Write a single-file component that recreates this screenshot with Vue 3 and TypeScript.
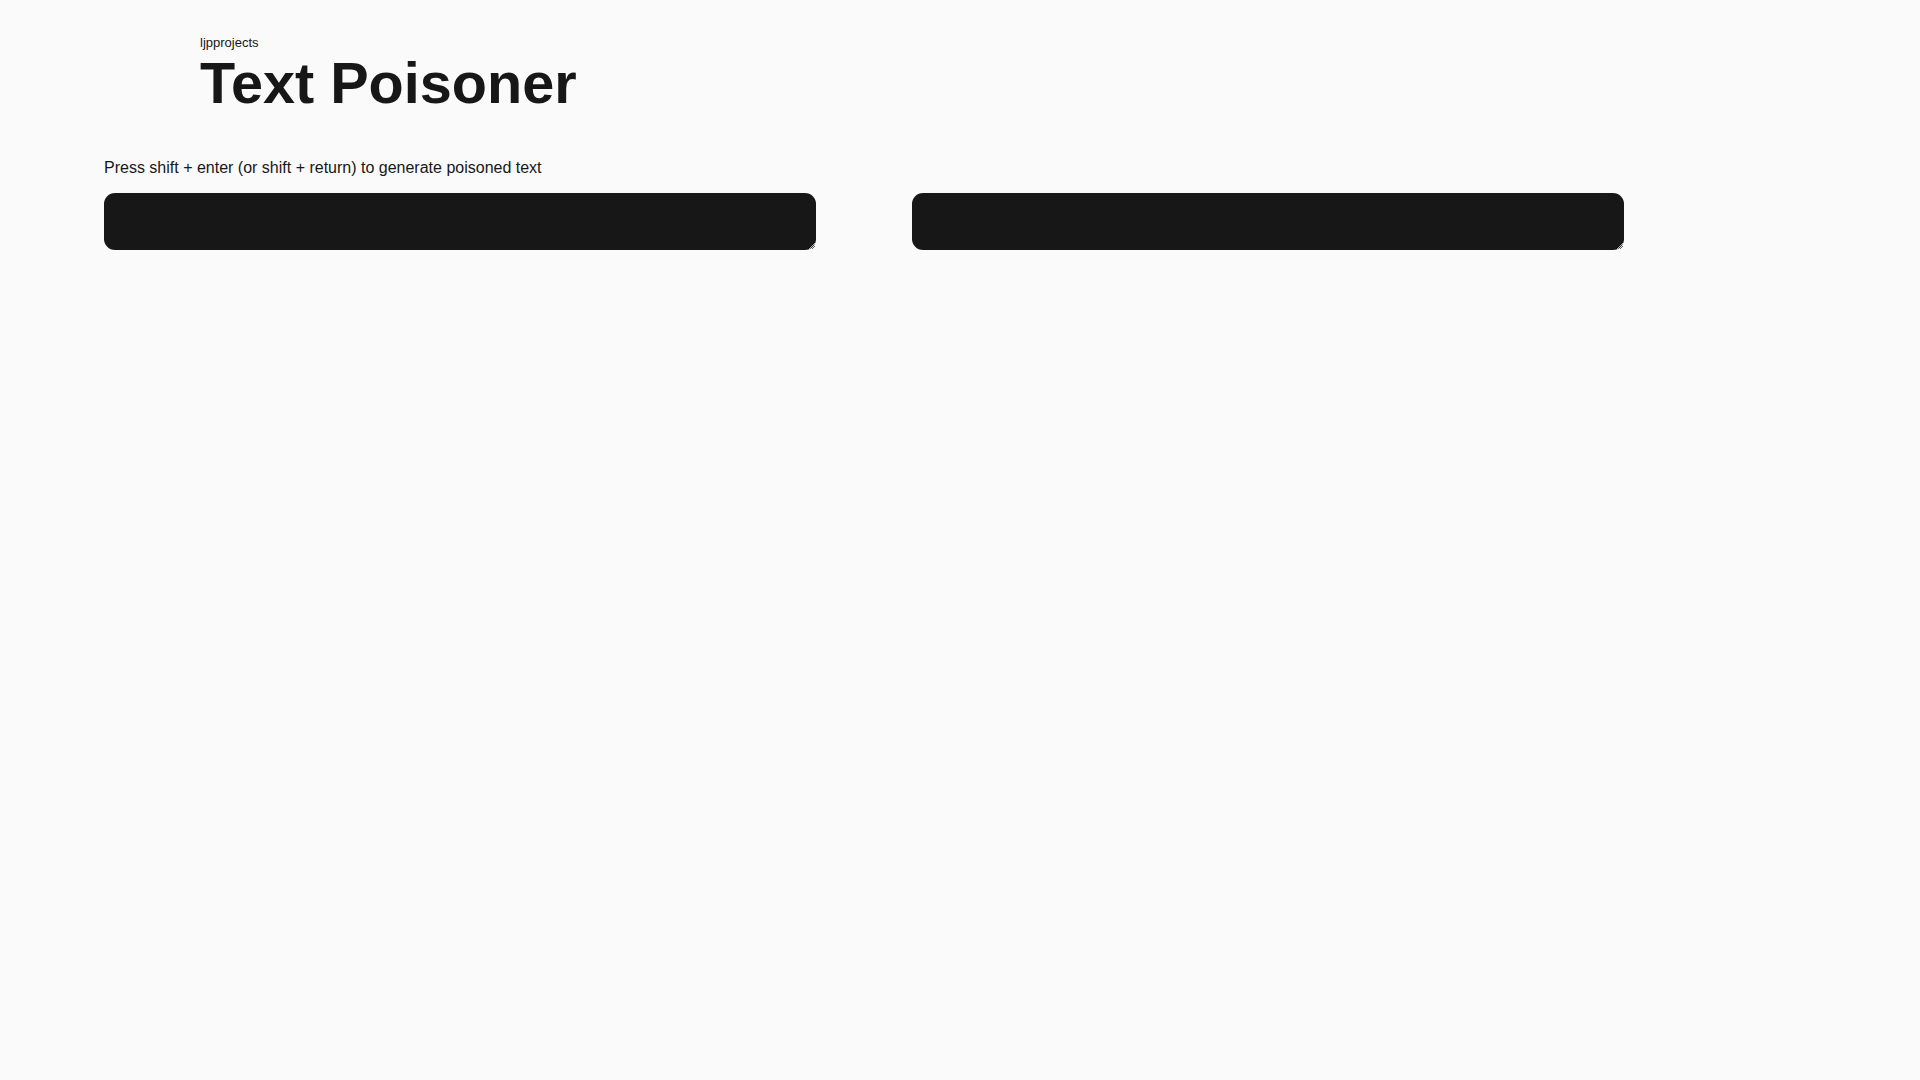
<script setup lang="ts">
import { ref } from 'vue'

const source = ref('')
const poisoned = ref('')

const lookalikes: Record<string, string> = {
  a: 'а',
  c: 'с',
  e: 'е',
  i: 'і',
  o: 'о',
  p: 'р',
  x: 'х',
  y: 'у',
}

function poison(): void {
  poisoned.value = Array.from(source.value, (ch) => lookalikes[ch] ?? ch).join('')
}
</script>

<template>
  <div class="page">
    <header class="header">
      <div class="brand">ljpprojects</div>
      <h1 class="title">Text Poisoner</h1>
    </header>
    <main class="main">
      <label class="hint" for="source">Press shift + enter (or shift + return) to generate poisoned text</label>
      <div class="panes">
        <textarea id="source" v-model="source" class="pane" @keydown.shift.enter.prevent="poison"></textarea>
        <textarea v-model="poisoned" class="pane" aria-label="Poisoned text" readonly></textarea>
      </div>
    </main>
  </div>
</template>

<style>
body {
  margin: 0;
  background: #fafafa;
}
</style>

<style scoped>
.page {
  padding: 32px 296px 32px 104px;
  color: #171717;
  font-family: "Liberation Sans", Arial, sans-serif;
}

.header {
  padding-left: 96px;
}

.brand {
  font-size: 13px;
  line-height: 22px;
}

.title {
  margin: 0;
  font-size: 3vw;
  line-height: 58px;
  font-weight: 700;
}

.main {
  margin-top: 44px;
}

.hint {
  display: block;
  font-size: 16px;
  line-height: 24px;
}

.panes {
  display: grid;
  grid-template-columns: 1fr 1fr;
  gap: 96px;
  margin-top: 13px;
}

.pane {
  box-sizing: border-box;
  width: 100%;
  height: 57px;
  padding: 12px;
  border: 0;
  border-radius: 11px;
  outline: 0;
  background: #171717;
  color: #fafafa;
  font-family: inherit;
  font-size: 16px;
}
</style>
